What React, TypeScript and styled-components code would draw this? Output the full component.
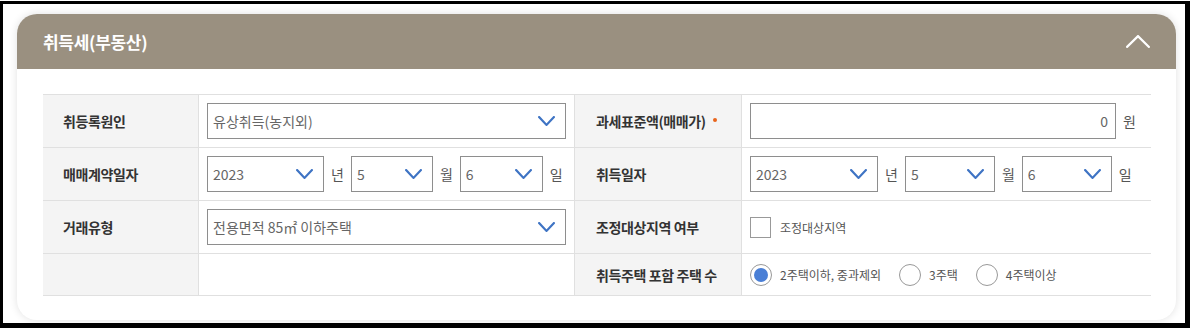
import React from "react";
import styled, { createGlobalStyle } from "styled-components";

const GlobalStyle = createGlobalStyle`
  html, body {
    margin: 0;
    padding: 0;
    background: #fff;
    font-family: "Noto Sans CJK KR", "Noto Sans", sans-serif;
  }
`;

const Frame = styled.div`
  box-sizing: border-box;
  margin-top: 1px;
  width: 1190px;
  height: 327px;
  border-style: solid;
  border-color: #000;
  border-width: 3px 5px 5px 3px;
  padding: 10px 9px 0 14px;
  overflow: hidden;
`;

const Card = styled.section`
  background: #fff;
  border-radius: 20px;
  box-shadow: 0 0 8px rgba(0, 0, 0, 0.12);
  overflow: hidden;
  height: 306px;
`;

const Header = styled.header`
  height: 55px;
  background: #9a9080;
  display: flex;
  align-items: center;
  justify-content: space-between;
  padding: 0 26px;
`;

const Title = styled.h2`
  margin: 0;
  color: #fff;
  font-size: 17px;
  font-weight: 700;
  letter-spacing: -0.3px;
`;

const Body = styled.div`
  padding: 25px 25px 25px 26px;
`;

const Table = styled.div`
  display: grid;
  grid-template-columns: 155px 376px 167px 410px;
  grid-template-rows: 53px 53px 53px 42px;
  border-top: 1px solid #e0e0e0;
`;

const Label = styled.div<{ $first?: boolean }>`
  background: #f4f4f4;
  border-bottom: 1px solid #e0e0e0;
  border-left: ${(p) => (p.$first ? "none" : "1px solid #e0e0e0")};
  display: flex;
  align-items: center;
  padding-left: ${(p) => (p.$first ? "20px" : "21px")};
  font-size: 14px;
  font-weight: 700;
  color: #333;
  letter-spacing: -0.4px;
`;

const Dot = styled.span`
  width: 4px;
  height: 4px;
  border-radius: 50%;
  background: #e8641b;
  margin: 0 0 3px 7px;
`;

const Cell = styled.div`
  border-bottom: 1px solid #e0e0e0;
  border-left: 1px solid #e0e0e0;
  display: flex;
  align-items: center;
  padding: 0 8px;
  box-sizing: border-box;
`;

const SelectBox = styled.div<{ $w?: number }>`
  box-sizing: border-box;
  flex-shrink: 0;
  height: 36px;
  width: ${(p) => (p.$w ? `${p.$w}px` : "100%")};
  border: 1px solid #8e8e8e;
  display: flex;
  align-items: center;
  justify-content: space-between;
  padding: 0 10px 0 5px;
  font-size: 14px;
  color: #666;
`;

const TextInput = styled.div`
  box-sizing: border-box;
  height: 36px;
  flex: 1;
  border: 1px solid #8e8e8e;
  display: flex;
  align-items: center;
  justify-content: flex-end;
  padding: 0 7px;
  font-size: 14px;
  color: #666;
`;

const Unit = styled.span<{ $last?: boolean }>`
  font-size: 14px;
  color: #555;
  margin: ${(p) => (p.$last ? "0 0 0 7px" : "0 7px")};
`;

const Check = styled.span`
  box-sizing: border-box;
  width: 21px;
  height: 21px;
  border: 1px solid #999;
  background: #fff;
  margin-right: 9px;
`;

const OptionText = styled.span`
  font-size: 12px;
  color: #555;
  letter-spacing: 0;
`;

const RadioGroup = styled.div`
  display: flex;
  align-items: center;
`;

const RadioItem = styled.label`
  display: flex;
  align-items: center;
  margin-right: 18px;
`;

const RadioCircle = styled.span<{ $on?: boolean }>`
  box-sizing: border-box;
  width: 22px;
  height: 22px;
  border-radius: 50%;
  border: 1px solid #999;
  background: #fff;
  margin-right: 8px;
  display: flex;
  align-items: center;
  justify-content: center;
  &::after {
    content: "";
    width: 14px;
    height: 14px;
    border-radius: 50%;
    background: ${(p) => (p.$on ? "#4a7fd6" : "transparent")};
  }
`;

const Chevron = ({ up, color, w, h, sw }: { up?: boolean; color: string; w: number; h: number; sw: number }) => (
  <svg width={w} height={h} viewBox={`0 0 ${w} ${h}`} fill="none">
    <polyline
      points={
        up
          ? `${sw / 2},${h - sw / 2} ${w / 2},${sw / 2} ${w - sw / 2},${h - sw / 2}`
          : `${sw / 2},${sw / 2} ${w / 2},${h - sw / 2} ${w - sw / 2},${sw / 2}`
      }
      stroke={color}
      strokeWidth={sw}
      strokeLinecap="square"
    />
  </svg>
);

const Select = ({ value, w }: { value: string; w?: number }) => (
  <SelectBox $w={w}>
    <span>{value}</span>
    <Chevron color="#3f74c4" w={17} h={10} sw={2.2} />
  </SelectBox>
);

const DateRow = ({ widths }: { widths: number[] }) => (
  <>
    <Select value="2023" w={widths[0]} />
    <Unit>년</Unit>
    <Select value="5" w={widths[1]} />
    <Unit>월</Unit>
    <Select value="6" w={widths[2]} />
    <Unit $last>일</Unit>
  </>
);

export default function App() {
  return (
    <>
      <GlobalStyle />
      <Frame>
        <Card>
          <Header>
            <Title>취득세(부동산)</Title>
            <Chevron up color="#fff" w={24} h={13} sw={2.2} />
          </Header>
          <Body>
            <Table>
              <Label $first>취등록원인</Label>
              <Cell>
                <Select value="유상취득(농지외)" />
              </Cell>
              <Label>
                과세표준액(매매가)
                <Dot />
              </Label>
              <Cell>
                <TextInput>0</TextInput>
                <Unit>원</Unit>
              </Cell>

              <Label $first>매매계약일자</Label>
              <Cell>
                <DateRow widths={[117, 82, 83]} />
              </Cell>
              <Label>취득일자</Label>
              <Cell>
                <DateRow widths={[128, 90, 90]} />
              </Cell>

              <Label $first>거래유형</Label>
              <Cell>
                <Select value="전용면적 85㎡ 이하주택" />
              </Cell>
              <Label>조정대상지역 여부</Label>
              <Cell>
                <Check />
                <OptionText>조정대상지역</OptionText>
              </Cell>

              <Label $first />
              <Cell />
              <Label>취득주택 포함 주택 수</Label>
              <Cell>
                <RadioGroup>
                  <RadioItem>
                    <RadioCircle $on />
                    <OptionText>2주택이하, 중과제외</OptionText>
                  </RadioItem>
                  <RadioItem>
                    <RadioCircle />
                    <OptionText>3주택</OptionText>
                  </RadioItem>
                  <RadioItem>
                    <RadioCircle />
                    <OptionText>4주택이상</OptionText>
                  </RadioItem>
                </RadioGroup>
              </Cell>
            </Table>
          </Body>
        </Card>
      </Frame>
    </>
  );
}
